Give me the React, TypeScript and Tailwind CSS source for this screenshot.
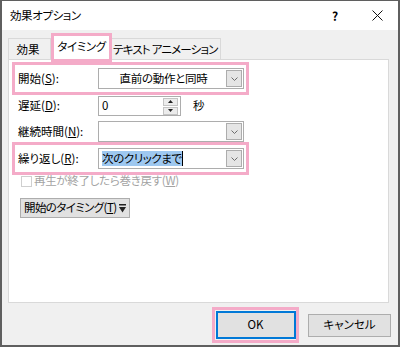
import type { ReactNode } from "react";

const FONT = "font-['Noto_Sans_CJK_JP','Noto_Sans',sans-serif] [font-feature-settings:'palt']";
const PINK = "border-[3px] border-[#f4abc8]";

function Chevron() {
	return (
		<svg width="7" height="4" viewBox="0 0 7 4" className="block">
			<polyline points="0.5,0.5 3.5,3.5 6.5,0.5" fill="none" stroke="#6d6d6d" strokeWidth="1" />
		</svg>
	);
}

function Combo({ children, center = false }: { children?: ReactNode; center?: boolean }) {
	return (
		<div className="flex h-[21px] w-[146px] items-center border border-[#adadad] bg-white pl-[2px] pr-[1px]">
			<div className={`flex min-w-0 flex-1 items-center ${center ? "justify-center" : ""}`}>{children}</div>
			<div className="flex h-[17px] w-[16px] items-center justify-center border border-[#adadad] bg-[#e5e5e5]">
				<Chevron />
			</div>
		</div>
	);
}

function Label({ text, accel }: { text: string; accel: string }) {
	return (
		<span className="whitespace-nowrap">
			{text}(<u>{accel}</u>):
		</span>
	);
}

export default function App() {
	return (
		<div className={`flex h-[347px] w-[400px] flex-col overflow-hidden whitespace-nowrap border-x-2 border-b-2 border-t border-[#5f5f5f] bg-[#f0f0f0] text-[11.5px] leading-none text-black ${FONT}`}>
			{/* title bar */}
			<div className="flex h-[29px] shrink-0 items-center bg-white pl-[8px]">
				<span className="tracking-[-0.4px]">効果オプション</span>
				<span className="ml-auto w-[30px] text-center font-bold text-[12px]">?</span>
				<span className="ml-[6px] flex w-[42px] justify-center">
					<svg width="11" height="11" viewBox="0 0 11 11">
						<path d="M0.5 0.5 L10.5 10.5 M10.5 0.5 L0.5 10.5" stroke="#111" strokeWidth="1" />
					</svg>
				</span>
			</div>

			{/* tabs */}
			<div className="relative z-10 mt-[3px] flex h-[29px] shrink-0 items-end pl-[6px]">
				<div className="mb-[3px] flex h-[21px] w-[43px] items-center justify-center border border-b-0 border-[#d9d9d9] pt-[2px] pr-[3px]">
					効果
				</div>
				<div className={`h-[29px] w-[61px] ${PINK}`}>
					<div className="flex h-full items-center justify-center bg-white pb-[2px] tracking-[-0.4px]">タイミング</div>
				</div>
				<div className="mb-[3px] flex h-[21px] items-center border border-b-0 border-l-0 border-[#d9d9d9] pl-[1px] pr-[2px] pt-[2px] tracking-[-0.8px]">
					テキスト アニメーション
				</div>
			</div>

			{/* panel */}
			<div className="ml-[6px] mt-[-3px] flex h-[244px] w-[381px] shrink-0 flex-col border border-[#d9d9d9] bg-white">
				<div className={`ml-[3px] mt-[2px] flex h-[33px] w-[237px] items-center ${PINK}`}>
					<div className="w-[83px] pl-[3px]">
						<Label text="開始" accel="S" />
					</div>
					<Combo center>
						<span className="tracking-[-0.3px]">直前の動作と同時</span>
					</Combo>
				</div>

				<div className="mt-[1px] flex h-[20px] items-center pl-[9px]">
					<div className="w-[80px]">
						<Label text="遅延" accel="D" />
					</div>
					<div className="flex h-[20px] w-[83px] items-center border border-[#adadad] pl-[3px] pr-[2px]">
						<span className="flex-1">0</span>
						<div className="flex w-[15px] flex-col gap-[1px]">
							<div className="flex h-[8px] items-center justify-center border border-[#c4c4c4] bg-[#ececec]">
								<svg width="5" height="3" viewBox="0 0 5 3">
									<polygon points="0,3 5,3 2.5,0" fill="#222" />
								</svg>
							</div>
							<div className="flex h-[8px] items-center justify-center border border-[#c4c4c4] bg-[#ececec]">
								<svg width="5" height="3" viewBox="0 0 5 3">
									<polygon points="0,0 5,0 2.5,3" fill="#222" />
								</svg>
							</div>
						</div>
					</div>
					<span className="ml-[12px]">秒</span>
				</div>

				<div className="mt-[5px] flex items-center pl-[9px]">
					<div className="w-[80px]">
						<Label text="継続時間" accel="N" />
					</div>
					<Combo />
				</div>

				<div className={`ml-[3px] flex h-[33px] w-[237px] items-center ${PINK}`}>
					<div className="w-[83px] pl-[3px]">
						<Label text="繰り返し" accel="R" />
					</div>
					<Combo>
						<span className="ml-[1px] bg-[#9ec8f0] py-[2px] tracking-[-0.4px]">次のクリックまで</span>
						<span className="h-[15px] w-[1px] bg-black" />
					</Combo>
				</div>

				<div className="mt-[-2px] flex h-[16px] items-center pl-[12px] text-[#a3a3a3]">
					<div className="h-[11px] w-[11px] border border-[#cfcfcf] bg-white" />
					<span className="ml-[2px] tracking-[-0.3px]">
						再生が終了したら巻き戻す(<u>W</u>)
					</span>
				</div>

				<div className="ml-[11px] mt-[9px] flex h-[20px] self-start items-center border border-[#adadad] bg-[#e1e1e1] pl-[3px] pr-[3px]">
					<span className="tracking-[-0.6px]">
						開始のタイミング(<u>T</u>)
					</span>
					<svg width="7" height="9" viewBox="0 0 7 9" className="ml-[3px] shrink-0">
						<rect x="0" y="0" width="7" height="1.5" fill="#222" />
						<polygon points="0,3 7,3 3.5,8.5" fill="#222" />
					</svg>
				</div>
			</div>

			{/* buttons */}
			<div className="mt-[4px] flex items-center justify-end pr-[7px]">
				<div className={`flex h-[36px] w-[87px] items-center justify-center ${PINK}`}>
					<div className="flex h-[28px] w-[80px] items-center justify-center border-2 border-[#0078d7] bg-[#e1e1e1]">OK</div>
				</div>
				<div className="ml-[9px] flex h-[23px] w-[83px] items-center justify-center border border-[#adadad] bg-[#e1e1e1]">
					キャンセル
				</div>
			</div>
		</div>
	);
}
